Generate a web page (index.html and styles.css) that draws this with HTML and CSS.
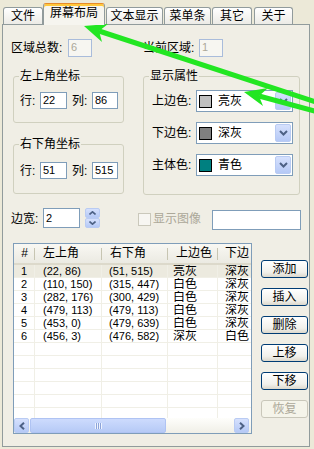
FILE: index.html
```html
<!DOCTYPE html>
<html lang="zh">
<head>
  <meta charset="UTF-8" />
  <meta name="viewport" content="width=device-width, initial-scale=1.0"/>
  <title>屏幕布局</title>
  <link rel="stylesheet" href="styles.css">
</head>
<body>
  <div class="tabs">
    <div class="tab tab-1">文件</div>
    <div class="tab tab-active">屏幕布局</div>
    <div class="tab tab-3">文本显示</div>
    <div class="tab tab-4">菜单条</div>
    <div class="tab tab-5">其它</div>
    <div class="tab tab-6">关于</div>
  </div>

  <div class="panel">
    <div class="row-count">
      <span class="lbl lbl-total">区域总数:</span>
      <span class="field field-dis">6</span>
      <span class="lbl lbl-current">当前区域:</span>
      <span class="field field-dis">1</span>
    </div>

    <div class="groups">
      <div class="col-left">
        <div class="group group-tl">
          <div class="group-title">左上角坐标</div>
          <div class="coord">
            <span class="lbl lbl-coord">行:</span><span class="field field-row">22</span>
            <span class="lbl lbl-coord lbl-col">列:</span><span class="field field-col">86</span>
          </div>
        </div>
        <div class="group group-br">
          <div class="group-title">右下角坐标</div>
          <div class="coord coord-br">
            <span class="lbl lbl-coord">行:</span><span class="field field-row">51</span>
            <span class="lbl lbl-coord lbl-col">列:</span><span class="field field-col">515</span>
          </div>
        </div>
      </div>

      <div class="group group-attr">
        <div class="group-title">显示属性</div>
        <div class="combo-row">
          <span class="lbl lbl-combo">上边色:</span>
          <div class="combo"><span class="swatch sw-light"></span><span class="combo-text">亮灰</span><span class="drop"><svg width="9" height="6" viewBox="0 0 9 6"><polyline points="1,1 4.5,4.5 8,1" fill="none" stroke="#4d6185" stroke-width="2"/></svg></span></div>
        </div>
        <div class="combo-row">
          <span class="lbl lbl-combo">下边色:</span>
          <div class="combo"><span class="swatch sw-dark"></span><span class="combo-text">深灰</span><span class="drop"><svg width="9" height="6" viewBox="0 0 9 6"><polyline points="1,1 4.5,4.5 8,1" fill="none" stroke="#4d6185" stroke-width="2"/></svg></span></div>
        </div>
        <div class="combo-row">
          <span class="lbl lbl-combo">主体色:</span>
          <div class="combo"><span class="swatch sw-teal"></span><span class="combo-text">青色</span><span class="drop"><svg width="9" height="6" viewBox="0 0 9 6"><polyline points="1,1 4.5,4.5 8,1" fill="none" stroke="#4d6185" stroke-width="2"/></svg></span></div>
        </div>
      </div>
    </div>

    <div class="row-width">
      <span class="lbl lbl-width">边宽:</span>
      <span class="field field-width">2</span>
      <div class="spin">
        <span class="spin-btn"><svg width="7" height="4" viewBox="0 0 7 4"><polyline points="0.5,3.5 3.5,0.8 6.5,3.5" fill="none" stroke="#4d6185" stroke-width="1.6"/></svg></span>
        <span class="spin-btn"><svg width="7" height="4" viewBox="0 0 7 4"><polyline points="0.5,0.5 3.5,3.2 6.5,0.5" fill="none" stroke="#4d6185" stroke-width="1.6"/></svg></span>
      </div>
      <span class="check"></span>
      <span class="lbl lbl-dis">显示图像</span>
      <span class="field field-image"></span>
    </div>

    <div class="bottom">
      <div class="listview">
        <div class="lv-head">
          <span class="hc hc-num">#</span>
          <span class="hc">左上角</span>
          <span class="hc">右下角</span>
          <span class="hc">上边色</span>
          <span class="hc">下边</span>
        </div>
        <div class="lv-body">
          <div class="lv-row lv-sel"><span class="c n">1</span><span class="c n">(22, 86)</span><span class="c n">(51, 515)</span><span class="c">亮灰</span><span class="c">深灰</span></div>
          <div class="lv-row"><span class="c n">2</span><span class="c n">(110, 150)</span><span class="c n">(315, 447)</span><span class="c">白色</span><span class="c">深灰</span></div>
          <div class="lv-row"><span class="c n">3</span><span class="c n">(282, 176)</span><span class="c n">(300, 429)</span><span class="c">白色</span><span class="c">深灰</span></div>
          <div class="lv-row"><span class="c n">4</span><span class="c n">(479, 113)</span><span class="c n">(479, 113)</span><span class="c">白色</span><span class="c">深灰</span></div>
          <div class="lv-row"><span class="c n">5</span><span class="c n">(453, 0)</span><span class="c n">(479, 639)</span><span class="c">白色</span><span class="c">深灰</span></div>
          <div class="lv-row"><span class="c n">6</span><span class="c n">(456, 3)</span><span class="c n">(476, 582)</span><span class="c">深灰</span><span class="c">白色</span></div>
          <div class="lv-row"><span class="c"></span><span class="c"></span><span class="c"></span><span class="c"></span><span class="c"></span></div>
          <div class="lv-row"><span class="c"></span><span class="c"></span><span class="c"></span><span class="c"></span><span class="c"></span></div>
          <div class="lv-row"><span class="c"></span><span class="c"></span><span class="c"></span><span class="c"></span><span class="c"></span></div>
          <div class="lv-row"><span class="c"></span><span class="c"></span><span class="c"></span><span class="c"></span><span class="c"></span></div>
          <div class="lv-row"><span class="c"></span><span class="c"></span><span class="c"></span><span class="c"></span><span class="c"></span></div>
          <div class="lv-row"><span class="c"></span><span class="c"></span><span class="c"></span><span class="c"></span><span class="c"></span></div>
        </div>
        <div class="hscroll">
          <span class="sb-btn"><svg width="6" height="8" viewBox="0 0 6 8"><polyline points="5,0.8 1.5,4 5,7.2" fill="none" stroke="#4d6185" stroke-width="2"/></svg></span>
          <span class="sb-thumb"><span class="grip"></span></span>
          <span class="sb-btn sb-right"><svg width="6" height="8" viewBox="0 0 6 8"><polyline points="1,0.8 4.5,4 1,7.2" fill="none" stroke="#4d6185" stroke-width="2"/></svg></span>
        </div>
      </div>

      <div class="buttons">
        <span class="btn">添加</span>
        <span class="btn">插入</span>
        <span class="btn">删除</span>
        <span class="btn">上移</span>
        <span class="btn">下移</span>
        <span class="btn btn-dis">恢复</span>
      </div>
    </div>
  </div>

  <!-- annotation arrows drawn over the dialog -->
  <svg class="arrows" width="314" height="449" viewBox="0 0 314 449">
    <line x1="99" y1="31" x2="322" y2="104" stroke="#22e622" stroke-width="5"/>
    <polygon points="84,26 108,24 99,31 102,42" fill="#22e622"/>
    <line x1="259" y1="96" x2="322" y2="113" stroke="#22e622" stroke-width="5"/>
    <polygon points="244,92 268,88 259,96 263,106" fill="#22e622"/>
  </svg>
</body>
</html>
```

FILE: styles.css
```css
body {
  margin: 0;
  width: 314px;
  height: 449px;
  overflow: hidden;
  position: relative;
  background: #ece9d8;
  font-family: "Liberation Sans", "Noto Sans CJK SC", sans-serif;
  font-size: 12px;
  color: #000;
}

/* tab strip */
.tabs {
  display: flex;
  align-items: flex-end;
  height: 24px;
  padding-left: 3px;
}

.tab {
  height: 17px;
  box-sizing: border-box;
  border: 1px solid #919b9c;
  border-bottom: none;
  border-radius: 3px 3px 0 0;
  background: linear-gradient(#ffffff, #ecebe6);
  text-align: center;
  line-height: 16px;
}

.tab-1 { width: 40px; }
.tab-3 { width: 57px; margin-left: 1px; }
.tab-4 { width: 47px; margin-left: 1px; }
.tab-5 { width: 40px; margin-left: 1px; }
.tab-6 { width: 39px; margin-left: 2px; }

.tab-active {
  width: 62px;
  height: 22px;
  margin-bottom: -1px;
  position: relative;
  z-index: 1;
  border-top: 1px solid #e68b2c;
  box-shadow: inset 0 2px 0 #ffc83c;
  background: #f6f5ef;
  line-height: 19px;
}

.panel {
  margin-left: 2px;
  width: 308px;
  height: 423px;
  box-sizing: border-box;
  border: 1px solid #919b9c;
  background: #f0eee5;
}

.lbl {
  white-space: nowrap;
  line-height: 14px;
}

.field {
  box-sizing: border-box;
  height: 17px;
  border: 1px solid #7f9db9;
  background: #fff;
  padding-left: 2px;
  font-size: 11px;
  line-height: 15px;
}

.field-dis {
  width: 24px;
  height: 18px;
  border-color: #a9bcdb;
  color: #aca899;
  background: #f7f6f1;
}

/* first row */
.row-count {
  display: flex;
  align-items: center;
  margin-top: 14px;
  padding-left: 8px;
  height: 18px;
}

.lbl-total { width: 57px; }
.lbl-current { width: 56px; margin-left: 51px; }

/* group boxes */
.groups {
  display: flex;
  margin-top: 19px;
  padding-left: 10px;
}

.col-left { width: 111px; }

.group {
  box-sizing: border-box;
  border: 1px solid #d0d0bf;
  border-radius: 3px;
}

.group-title {
  width: fit-content;
  margin: -8px 0 0 5px;
  padding: 0 1px;
  line-height: 14px;
  background: #f0eee5;
}

.group-tl { height: 47px; }
.group-br { height: 50px; margin-top: 21px; }

.coord {
  display: flex;
  align-items: center;
  margin-top: 9px;
  padding-left: 6px;
}

.coord-br { margin-top: 11px; }

.lbl-coord { width: 20px; }
.lbl-col { margin-left: 5px; }
.field-row { width: 27px; }
.field-col { width: 26px; }

.group-attr {
  width: 157px;
  height: 119px;
  margin-left: 19px;
}

.combo-row {
  display: flex;
  align-items: center;
  margin-top: 10px;
  padding-left: 8px;
}

.group-attr .group-title + .combo-row { margin-top: 7px; }

.lbl-combo { width: 44px; }

.combo {
  display: flex;
  align-items: center;
  box-sizing: border-box;
  width: 97px;
  height: 22px;
  border: 1px solid #7f9db9;
  background: #fff;
}

.swatch {
  width: 13px;
  height: 13px;
  box-sizing: border-box;
  border: 1px solid #000;
  margin-left: 2px;
}

.sw-light { background: #c0c0c0; }
.sw-dark { background: #808080; }
.sw-teal { background: #008080; }

.combo-text {
  margin-left: 6px;
  line-height: 14px;
}

.drop {
  display: flex;
  align-items: center;
  justify-content: center;
  margin-left: auto;
  margin-right: 1px;
  width: 16px;
  height: 18px;
  border: 1px solid #b9cbf3;
  border-radius: 2px;
  box-sizing: border-box;
  background: linear-gradient(#d6e1fd, #b5c9f6);
}

/* border width row */
.row-width {
  display: flex;
  align-items: flex-start;
  margin-top: 13px;
  padding-left: 8px;
  height: 22px;
}

.lbl-width { width: 32px; margin-top: 4px; }

.field-width {
  width: 37px;
  height: 20px;
  line-height: 18px;
}

.spin {
  display: flex;
  flex-direction: column;
  width: 15px;
  height: 20px;
  margin-left: 5px;
}

.spin-btn {
  display: flex;
  align-items: center;
  justify-content: center;
  height: 10px;
  box-sizing: border-box;
  border: 1px solid #b9cbf3;
  border-radius: 2px;
  background: linear-gradient(#d6e1fd, #b5c9f6);
}

.check {
  width: 13px;
  height: 13px;
  box-sizing: border-box;
  margin: 5px 0 0 38px;
  border: 1px solid #cac8bb;
  background: #f7f6f2;
}

.lbl-dis {
  color: #aca899;
  margin: 4px 0 0 2px;
  width: 48px;
}

.field-image {
  width: 89px;
  height: 20px;
  margin: 2px 0 0 11px;
}

/* list and buttons */
.bottom {
  display: flex;
  margin-top: 13px;
  padding-left: 10px;
}

.listview {
  display: flex;
  flex-direction: column;
  width: 239px;
  height: 191px;
  box-sizing: border-box;
  border: 1px solid #7f9db9;
  background: #fff;
  overflow: hidden;
}

.lv-head,
.lv-row {
  display: grid;
  grid-template-columns: 21px 67px 66px 50px 33px;
}

.lv-head {
  height: 21px;
  box-sizing: border-box;
  border-bottom: 2px solid #dcd9cb;
  background: linear-gradient(#f9f8f3, #ebeae2);
}

.hc {
  padding-left: 8px;
  line-height: 19px;
  white-space: nowrap;
  background: linear-gradient(#c7c5b2, #c7c5b2) no-repeat right 4px / 1px 12px;
}

.hc:last-child {
  padding-left: 7px;
  background: none;
}

.hc-num {
  padding-left: 0;
  text-align: center;
}

.lv-body {
  flex: 1;
  overflow: hidden;
}

.lv-row { height: 13px; }

.lv-sel { background: #eceadf; }

.c {
  box-sizing: border-box;
  height: 13px;
  padding-left: 7px;
  border-right: 1px solid #f0efe6;
  border-bottom: 1px solid #f0efe6;
  line-height: 12px;
  white-space: nowrap;
  overflow: hidden;
}

.c.n { font-size: 11px; }

.lv-row .c:nth-child(2) { padding-left: 8px; }
.lv-row .c:nth-child(4) { padding-left: 5px; }
.lv-row .c:last-child { border-right: none; }

.hscroll {
  display: flex;
  height: 15px;
  background: linear-gradient(#fefefb, #f0efe7);
}

.sb-btn {
  display: flex;
  align-items: center;
  justify-content: center;
  width: 15px;
  height: 15px;
  box-sizing: border-box;
  border: 1px solid #b9cbf3;
  border-radius: 2px;
  background: linear-gradient(#d6e1fd, #b5c9f6);
}

.sb-right { margin-left: auto; margin-right: 2px; }

.sb-thumb {
  display: flex;
  align-items: center;
  justify-content: center;
  width: 136px;
  height: 15px;
  margin-left: 1px;
  box-sizing: border-box;
  border: 1px solid #afc3f3;
  border-radius: 2px;
  background: linear-gradient(#cddbfd, #b6caf6);
}

.grip {
  width: 7px;
  height: 6px;
  background: repeating-linear-gradient(90deg, #eef3fe 0 1px, #8da4d9 1px 2px);
}

.buttons {
  display: flex;
  flex-direction: column;
  gap: 10px;
  margin-left: 9px;
  padding-top: 17px;
}

.btn {
  width: 47px;
  height: 18px;
  box-sizing: border-box;
  border: 1px solid #003c74;
  border-radius: 3px;
  background: linear-gradient(#ffffff, #f1f0eb 70%, #dcd8cc);
  text-align: center;
  line-height: 16px;
}

.btn-dis {
  border-color: #c9c7ba;
  background: #f5f4ea;
  color: #aca899;
}

.arrows {
  position: absolute;
  left: 0;
  top: 0;
  pointer-events: none;
}
```
